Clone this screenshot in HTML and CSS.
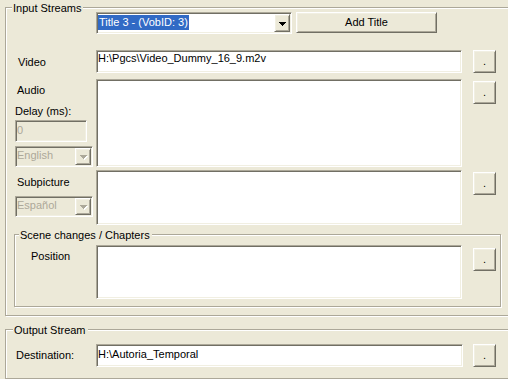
FILE: index.html
```html
<!DOCTYPE html>
<html lang="en">
<head>
    <meta charset="UTF-8">
    <title>Input Streams</title>
    <link rel="stylesheet" href="styles.css">
</head>
<body>
    <div class="group group-input">
        <div class="group-title title-input">Input Streams</div>

        <div class="row row-title">
            <div class="side"></div>
            <div class="combo combo-title">
                <span class="combo-text selected">Title 3 - (VobID: 3)</span>
                <span class="drop-btn">
                    <svg class="arrow" width="7" height="4" viewBox="0 0 7 4"><path d="M0 0h7v1H0zM1 1h5v1H1zM2 2h3v1H2zM3 3h1v1H3z"/></svg>
                </span>
            </div>
            <button class="btn btn-add">Add Title</button>
        </div>

        <div class="row row-video">
            <div class="side"><div class="lbl lbl-video">Video</div></div>
            <div class="field field-video">H:\Pgcs\Video_Dummy_16_9.m2v</div>
            <button class="btn btn-browse">.</button>
        </div>

        <div class="row row-audio">
            <div class="side">
                <div class="lbl lbl-audio">Audio</div>
                <div class="lbl lbl-delay">Delay (ms):</div>
                <div class="field disabled field-delay">0</div>
                <div class="combo disabled combo-small combo-lang">
                    <span class="combo-text">English</span>
                    <span class="drop-btn">
                        <svg class="arrow" width="7" height="4" viewBox="0 0 7 4"><path d="M0 0h7v1H0zM1 1h5v1H1zM2 2h3v1H2zM3 3h1v1H3z"/></svg>
                    </span>
                </div>
            </div>
            <div class="field field-audio"></div>
            <button class="btn btn-browse btn-low">.</button>
        </div>

        <div class="row row-sub">
            <div class="side">
                <div class="lbl lbl-sub">Subpicture</div>
                <div class="combo disabled combo-small combo-sublang">
                    <span class="combo-text">Español</span>
                    <span class="drop-btn">
                        <svg class="arrow" width="7" height="4" viewBox="0 0 7 4"><path d="M0 0h7v1H0zM1 1h5v1H1zM2 2h3v1H2zM3 3h1v1H3z"/></svg>
                    </span>
                </div>
            </div>
            <div class="field field-sub"></div>
            <button class="btn btn-browse btn-low">.</button>
        </div>

        <div class="group group-scene">
            <div class="group-title title-scene">Scene changes / Chapters</div>
            <div class="row row-pos">
                <div class="side side-scene"><div class="lbl lbl-pos">Position</div></div>
                <div class="field field-pos"></div>
                <button class="btn btn-browse btn-pos">.</button>
            </div>
        </div>
    </div>

    <div class="group group-output">
        <div class="group-title title-output">Output Stream</div>
        <div class="row row-dest">
            <div class="side"><div class="lbl lbl-dest">Destination:</div></div>
            <div class="field field-dest">H:\Autoria_Temporal</div>
            <button class="btn btn-browse">.</button>
        </div>
    </div>
</body>
</html>
```

FILE: styles.css
```css
/* Window */
* {
    box-sizing: border-box;
}

html, body {
    overflow: hidden;
}

body {
    margin: 0;
    background: #ECE9D8;
    font-family: "Liberation Sans", Arial, sans-serif;
    font-size: 11px;
    line-height: 13px;
    color: #000;
}

/* Group boxes (etched frame) */
.group {
    border: 1px solid #ACA899;
    box-shadow: 1px 1px 0 #fff, inset 1px 1px 0 #fff;
}

.group-title {
    width: fit-content;
    height: 13px;
    margin: -6px 0 -7px 6px;
    padding: 0 2px 0 1px;
    background: #ECE9D8;
    white-space: nowrap;
}

.group-input {
    margin: 7px -20px 0 5px;
    padding-bottom: 8px;
}

.group-scene {
    width: 487px;
    margin: 9px 0 0 8px;
    padding-bottom: 7px;
}

.title-scene {
    margin-left: 4px;
}

.group-output {
    margin: 13px -20px 0 5px;
    padding-bottom: 11px;
}

.title-output {
    margin-left: 7px;
}

/* Rows */
.row {
    display: flex;
    align-items: flex-start;
}

.side {
    width: 90px;
    flex: none;
    padding-left: 9px;
}

.side-scene {
    width: 81px;
    padding-left: 0;
}

.row-title { margin-top: 4px; }
.row-video { margin-top: 16px; }
.row-audio { margin-top: 6px; }
.row-sub { margin-top: 3px; }
.row-pos { margin-top: 10px; }
.row-dest { margin-top: 14px; }

/* Labels */
.lbl {
    white-space: nowrap;
    height: 13px;
}

.lbl-video { margin-top: 6px; padding-left: 3px; }
.lbl-audio { margin-top: 5px; padding-left: 2px; }
.lbl-delay { margin-top: 8px; }
.lbl-sub { margin-top: 6px; padding-left: 2px; }
.lbl-pos { margin-top: 5px; padding-left: 16px; }
.lbl-dest { margin-top: 5px; padding-left: 1px; }

/* Sunken edit / list boxes */
.field {
    flex: none;
    width: 366px;
    background: #fff;
    border: 1px solid;
    border-color: #ACA899 #fff #fff #ACA899;
    box-shadow: inset 1px 1px 0 #716F64, inset -1px -1px 0 #F1EFE2;
    padding: 1px 2px 0 1px;
    white-space: nowrap;
    overflow: hidden;
}

.field.disabled {
    background: #ECE9D8;
    color: #ACA899;
}

.field-video { height: 23px; }
.field-audio { height: 88px; }
.field-sub { height: 55px; }
.field-pos { height: 54px; }

.field-dest {
    width: 367px;
    height: 23px;
    padding-top: 3px;
}

.field-delay {
    width: 72px;
    height: 22px;
    margin-top: 2px;
    padding: 3px 0 0 1px;
}

/* Combo boxes */
.combo {
    display: flex;
    align-items: flex-start;
    background: #fff;
    border: 1px solid;
    border-color: #ACA899 #fff #fff #ACA899;
    box-shadow: inset 1px 1px 0 #716F64, inset -1px -1px 0 #F1EFE2;
    padding: 1px;
}

.combo-title {
    width: 196px;
    height: 22px;
}

.combo-text {
    white-space: nowrap;
    margin-top: 1px;
}

.selected {
    height: 15px;
    padding: 1px;
    background: #316AC5;
    color: #fff;
}

.combo.disabled {
    background: #ECE9D8;
    color: #ACA899;
}

.combo-small {
    width: 78px;
    height: 21px;
}

.combo-lang { margin-top: 4px; }
.combo-sublang { margin-top: 7px; }

.drop-btn {
    margin-left: auto;
    width: 16px;
    height: 18px;
    display: flex;
    align-items: center;
    justify-content: center;
    padding-top: 1px;
    background: #ECE9D8;
    border: 1px solid;
    border-color: #fff #716F64 #716F64 #fff;
    box-shadow: inset 1px 1px 0 #F1EFE2, inset -1px -1px 0 #ACA899;
}

.combo-small .drop-btn {
    height: 17px;
}

.arrow {
    display: block;
    fill: #000;
}

.disabled .arrow {
    fill: #ACA899;
    filter: drop-shadow(1px 1px 0 #fff);
}

/* Push buttons */
.btn {
    flex: none;
    font: inherit;
    color: #000;
    background: #ECE9D8;
    border: 1px solid;
    border-color: #fff #716F64 #716F64 #fff;
    box-shadow: inset 1px 1px 0 #F1EFE2, inset -1px -1px 0 #ACA899;
    padding: 0;
    border-radius: 0;
}

.btn-add {
    width: 141px;
    height: 21px;
    margin-left: 4px;
}

.btn-browse {
    width: 23px;
    height: 23px;
    margin-left: 11px;
}

.btn-low { margin-top: 2px; }
.btn-pos { margin-top: 3px; }

.row-dest .btn-browse {
    margin-left: 10px;
}
```
